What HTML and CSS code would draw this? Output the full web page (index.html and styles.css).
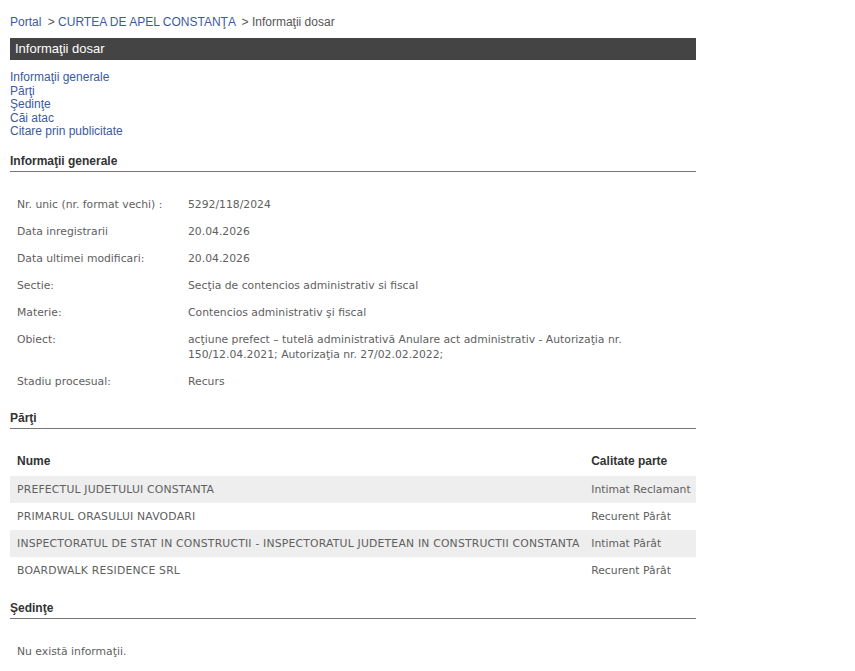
FILE: index.html
```html
<!DOCTYPE html>
<html lang="ro">
<head>
<meta charset="utf-8">
<title>Informaţii dosar</title>
<link rel="stylesheet" href="styles.css">
</head>
<body>
<div class="page">
  <div class="breadcrumb">
    <a href="#">Portal</a> <span class="sep">&gt;</span> <a href="#">CURTEA DE APEL CONSTANŢA</a> <span class="sep">&gt;</span> <span class="current">Informaţii dosar</span>
  </div>
  <div class="bar">Informaţii dosar</div>
  <nav class="toc">
    <a href="#gen">Informaţii generale</a>
    <a href="#parti">Părţi</a>
    <a href="#sedinte">Şedinţe</a>
    <a href="#cai">Căi atac</a>
    <a href="#citare">Citare prin publicitate</a>
  </nav>

  <h2 class="section-title first" id="gen">Informaţii generale</h2>
  <table class="info">
    <tr><td class="label">Nr. unic (nr. format vechi) :</td><td>5292/118/2024</td></tr>
    <tr><td class="label">Data inregistrarii</td><td>20.04.2026</td></tr>
    <tr><td class="label">Data ultimei modificari:</td><td>20.04.2026</td></tr>
    <tr><td class="label">Sectie:</td><td>Secţia de contencios administrativ si fiscal</td></tr>
    <tr><td class="label">Materie:</td><td>Contencios administrativ şi fiscal</td></tr>
    <tr><td class="label">Obiect:</td><td>acţiune prefect – tutelă administrativă Anulare act administrativ - Autorizaţia nr. 150/12.04.2021; Autorizaţia nr. 27/02.02.2022;</td></tr>
    <tr><td class="label">Stadiu procesual:</td><td>Recurs</td></tr>
  </table>

  <h2 class="section-title" id="parti">Părţi</h2>
  <table class="parties">
    <thead>
      <tr><th>Nume</th><th>Calitate parte</th></tr>
    </thead>
    <tbody>
      <tr class="alt"><td class="name">PREFECTUL JUDETULUI CONSTANTA</td><td class="role">Intimat Reclamant</td></tr>
      <tr><td class="name">PRIMARUL ORASULUI NAVODARI</td><td class="role">Recurent Pârât</td></tr>
      <tr class="alt"><td class="name">INSPECTORATUL DE STAT IN CONSTRUCTII - INSPECTORATUL JUDETEAN IN CONSTRUCTII CONSTANTA</td><td class="role">Intimat Pârât</td></tr>
      <tr><td class="name">BOARDWALK RESIDENCE SRL</td><td class="role">Recurent Pârât</td></tr>
    </tbody>
  </table>

  <h2 class="section-title last" id="sedinte">Şedinţe</h2>
  <p class="empty">Nu există informaţii.</p>
</div>
</body>
</html>
```

FILE: styles.css
```css
html, body {
  margin: 0;
  padding: 0;
  background: #ffffff;
}

body {
  font-family: "Liberation Sans", Arial, sans-serif;
  font-size: 12px;
  color: #333333;
}

.page {
  width: 686px;
  margin-left: 10px;
  padding-top: 15px;
}

a {
  color: #3b5b9b;
  text-decoration: none;
}

.breadcrumb {
  font-size: 12px;
  line-height: 15px;
  color: #555555;
}

.breadcrumb .sep {
  margin-left: 3px;
}

.bar {
  margin-top: 8px;
  height: 22px;
  line-height: 22px;
  background: #444444;
  color: #ffffff;
  font-size: 13px;
  padding-left: 5px;
}

.toc {
  margin-top: 11px;
  display: flex;
  flex-direction: column;
  align-items: flex-start;
  line-height: 13.5px;
  font-size: 12px;
}

.section-title {
  margin: 16px 0 0 0;
  font-size: 12px;
  font-weight: bold;
  line-height: 15px;
  color: #333333;
  padding-bottom: 2px;
  border-bottom: 1px solid #777777;
}

.section-title.first {
  margin-top: 15px;
}

.section-title.last {
  margin-top: 17px;
}

table {
  border-collapse: collapse;
  width: 100%;
  margin-top: 19px;
  font-family: "DejaVu Sans", sans-serif;
  font-size: 10.8px;
  color: #606060;
}

td, th {
  padding: 6px 7px;
  line-height: 15px;
  text-align: left;
  vertical-align: top;
}

.info .label {
  width: 157px;
}

.parties th {
  font-family: "Liberation Sans", Arial, sans-serif;
  font-size: 12px;
  font-weight: bold;
  color: #333333;
  padding-bottom: 7px;
}

.parties .name {
  letter-spacing: 0.2px;
  padding-right: 5px;
}

.parties .role,
.parties th:last-child {
  white-space: nowrap;
  padding-left: 5px;
  padding-right: 5px;
}

.parties tr.alt td {
  background: #eeeeee;
}

.empty {
  margin: 19px 0 0 0;
  padding: 6px 7px;
  line-height: 15px;
  font-family: "DejaVu Sans", sans-serif;
  font-size: 10.8px;
  color: #606060;
}
```
